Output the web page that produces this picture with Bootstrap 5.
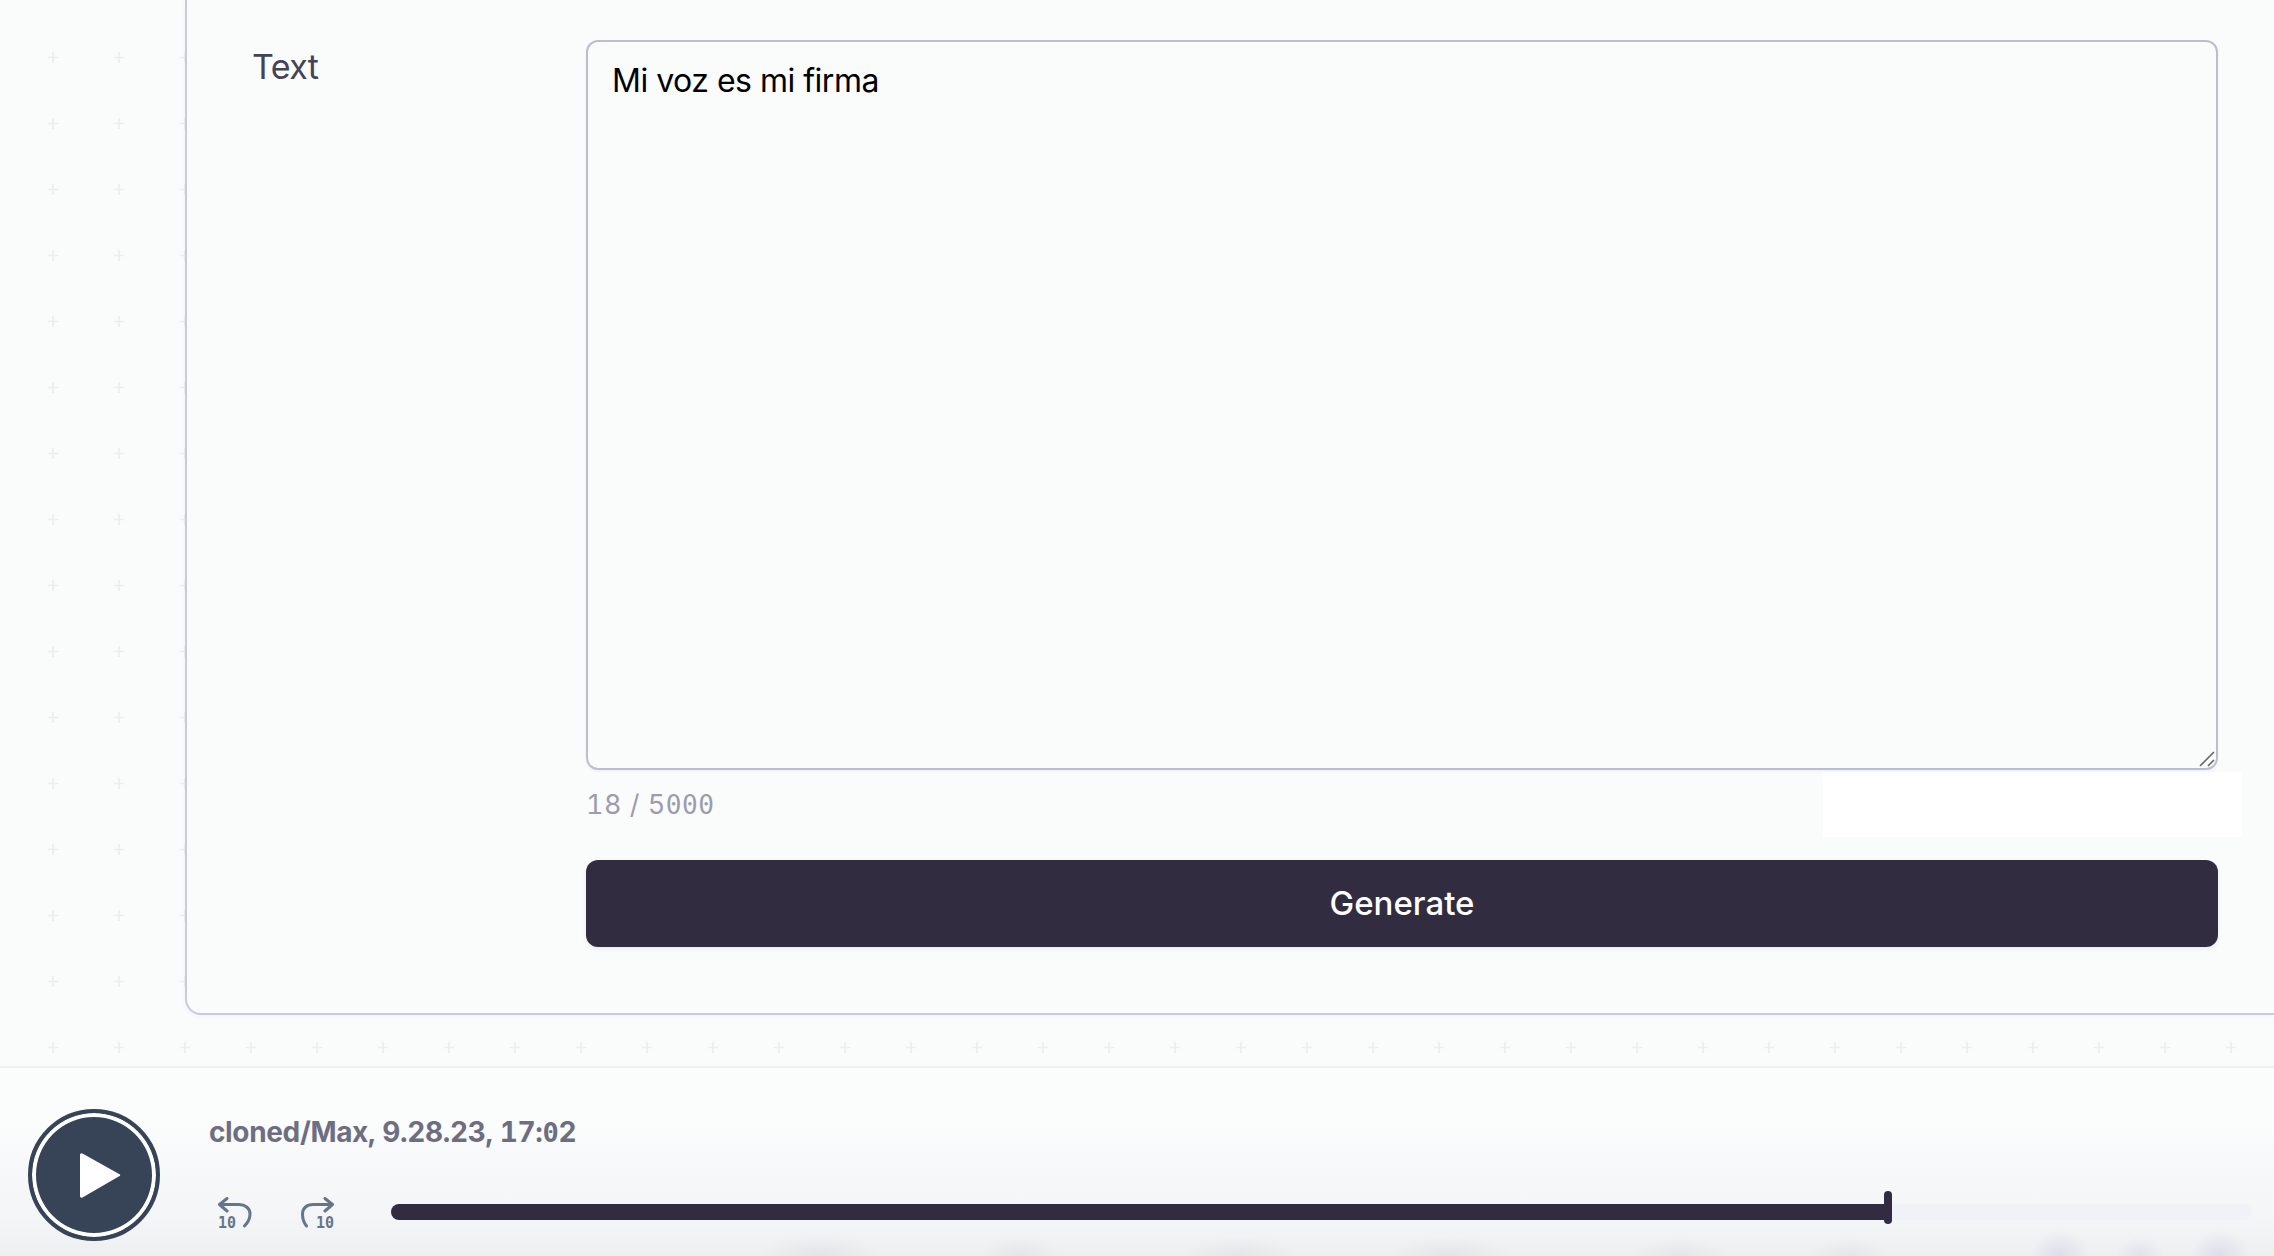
<!DOCTYPE html>
<html lang="en">
<head>
<meta charset="utf-8">
<title>Text to speech</title>
<link href="https://cdn.jsdelivr.net/npm/bootstrap@5.3.0/dist/css/bootstrap.min.css" rel="stylesheet">
<style>
html,body{height:100%;}
body{margin:0;overflow:hidden;background:#fafcfc;font-family:Inter,"Liberation Sans",sans-serif;}
.app-shell{height:1256px;}
.stage{height:1066px;overflow:hidden;padding-left:185px;
  background-color:#fafcfc;
  background-image:url("data:image/svg+xml,%3Csvg xmlns='http://www.w3.org/2000/svg' width='66' height='66'%3E%3Cpath d='M33 28v11M27.5 33.5h11' stroke='%23ebedef' stroke-width='1.6'/%3E%3C/svg%3E");
  background-position:20px 24px;background-size:66px 66px;}
.panel-box{margin-right:-80px;padding:40px 136px 66px 65px;background:#fafcfc;
  border-left:2px solid #c8cbd9;border-bottom:2px solid #c8cbd9;border-bottom-left-radius:16px;
  box-shadow:0 2px 4px rgba(60,60,90,.04);}
.field-label{width:334px;flex:none;font-size:34px;line-height:40px;padding-top:7px;color:#454358;font-weight:400;letter-spacing:-.6px;}
.field-body{width:1632px;flex:none;}
.input-wrap{height:730px;}
.text-input.form-control{height:100%;resize:none;padding:20px 24px;font-size:32px;line-height:38px;letter-spacing:-.5px;color:#000;background:#fafcfc;
  border:2px solid #bcbdd0;border-radius:12px;font-family:Inter,"Liberation Sans",sans-serif;box-shadow:0 2px 3px rgba(60,60,90,.05);}
.resize-grip{position:absolute;right:3px;bottom:3px;}
.counter-row{margin-top:2px;}
.counter-text{font-size:27px;line-height:32px;letter-spacing:.5px;color:#9c9cae;font-feature-settings:"tnum";}
.slash-zero{font-family:"DejaVu Sans Mono",monospace;font-size:.97em;}
.blank-box{width:419px;height:65px;margin-right:-24px;background:#fff;}
.generate-btn.btn{display:block;width:100%;height:87px;margin-top:23px;border:0;border-radius:12px;background:#312c40;color:#fff;font-size:33px;font-weight:500;line-height:87px;padding:0;box-shadow:0 2px 4px rgba(50,45,65,.08);}
.player-bar{height:190px;border-top:2px solid #eef0f1;padding:41px 22px 0 28px;
  background:
   radial-gradient(ellipse 60px 22px at 820px 100%,rgba(205,208,214,.35),transparent),
   radial-gradient(ellipse 40px 20px at 1020px 100%,rgba(205,208,214,.3),transparent),
   radial-gradient(ellipse 60px 20px at 1240px 100%,rgba(205,208,214,.3),transparent),
   radial-gradient(ellipse 60px 20px at 1450px 100%,rgba(205,208,214,.35),transparent),
   radial-gradient(ellipse 50px 18px at 1680px 100%,rgba(205,208,214,.3),transparent),
   radial-gradient(ellipse 40px 18px at 1850px 100%,rgba(205,208,214,.3),transparent),
   radial-gradient(ellipse 30px 26px at 2060px 100%,rgba(190,198,222,.4),transparent),
   radial-gradient(ellipse 24px 20px at 2140px 100%,rgba(190,198,222,.3),transparent),
   radial-gradient(ellipse 30px 26px at 2220px 100%,rgba(190,198,222,.4),transparent),
   linear-gradient(to bottom,#fbfdfd 0,#fbfcfc 30%,#f7f8fa 55%,#f4f5f7 80%,#eeeff0 100%);}
.play-btn{width:132px;height:132px;flex:none;padding:0 0 0 14px;border:4px solid #374357;border-radius:50%;background:#374357;box-shadow:inset 0 0 0 4px #fff;display:flex;align-items:center;justify-content:center;}
.player-main{margin-left:49px;min-width:0;}
.track-title{font-size:28px;line-height:34px;font-weight:700;color:#6e6e82;font-feature-settings:"tnum";margin-top:6px;letter-spacing:-.35px;}
.control-row{margin-top:47px;padding-left:9px;}
.skip-btn{width:34px;height:36px;padding:0;border:0;background:none;line-height:0;}
.skip-btn+.skip-btn{margin-left:49px;}
.skip-btn text{font-family:"DejaVu Sans Mono",monospace;font-weight:700;font-size:15px;fill:#66758a;}
.track-line{position:relative;width:1860px;height:16px;margin:7px 0 0 56px;border-radius:8px;background:#eff2f7;}
.track-fill{height:100%;border-radius:8px 0 0 8px;background:#312c40;}
.track-thumb{position:absolute;top:-13px;width:8px;height:33px;margin-left:-1px;border-radius:4px;background:#312c40;}
</style>
</head>
<body>
<div class="app-shell d-flex flex-column">
  <main class="stage">
    <section class="panel-box d-flex">
      <label class="field-label" for="voice-text">Text</label>
      <div class="field-body">
        <div class="input-wrap position-relative">
          <textarea id="voice-text" class="form-control text-input">Mi voz es mi firma</textarea>
          <svg class="resize-grip" width="16" height="16" viewBox="0 0 16 16"><path d="M1 15 15 1M9 15l6-6" stroke="#666" stroke-width="1.6" fill="none"/></svg>
        </div>
        <div class="counter-row d-flex justify-content-between align-items-center">
          <span class="counter-text">18 / 5<span class="slash-zero">000</span></span>
          <div class="blank-box"></div>
        </div>
        <button type="button" class="btn generate-btn">Generate</button>
      </div>
    </section>
  </main>
  <footer class="player-bar d-flex">
    <button type="button" class="play-btn" aria-label="Play">
      <svg width="44" height="48" viewBox="0 0 44 48" class="d-block"><path d="M3.500 2.500 41 23.600a1 1 0 0 1 0 1.200L3.500 46.500a1.600 1.600 0 0 1-2.500-1.300V3.800a1.600 1.600 0 0 1 2.500-1.300Z" fill="#fff"/></svg>
    </button>
    <div class="player-main flex-grow-1">
      <div class="track-title">cloned/Max, 9.28.23, 17:<span class="slash-zero">0</span>2</div>
      <div class="control-row d-flex align-items-start">
        <button type="button" class="skip-btn" aria-label="Back 10 seconds">
          <svg width="34" height="36" viewBox="0 0 34 36" class="d-block"><path d="M9 1.500 1.500 7.500 9 14M1.500 7.500H21C27 7.500 32 11 32 17c0 5-2.500 9-5.500 12" fill="none" stroke="#66758a" stroke-width="3" stroke-linecap="round" stroke-linejoin="round"/><text x="0" y="31">10</text></svg>
        </button>
        <button type="button" class="skip-btn" aria-label="Forward 10 seconds">
          <svg width="34" height="36" viewBox="0 0 34 36" class="d-block"><path d="M24 1.500 31.500 7.500 24 14M31.500 7.500H12C6 7.500 1.500 11 1.500 17c0 5 1.500 9 4 12" fill="none" stroke="#66758a" stroke-width="3" stroke-linecap="round" stroke-linejoin="round"/><text x="15" y="31">10</text></svg>
        </button>
        <div class="track-line">
          <div class="track-fill" style="width:80.3%"></div>
          <div class="track-thumb" style="left:80.3%"></div>
        </div>
      </div>
    </div>
  </footer>
</div>
<script src="https://cdn.jsdelivr.net/npm/bootstrap@5.3.0/dist/js/bootstrap.bundle.min.js"></script>
</body>
</html>
